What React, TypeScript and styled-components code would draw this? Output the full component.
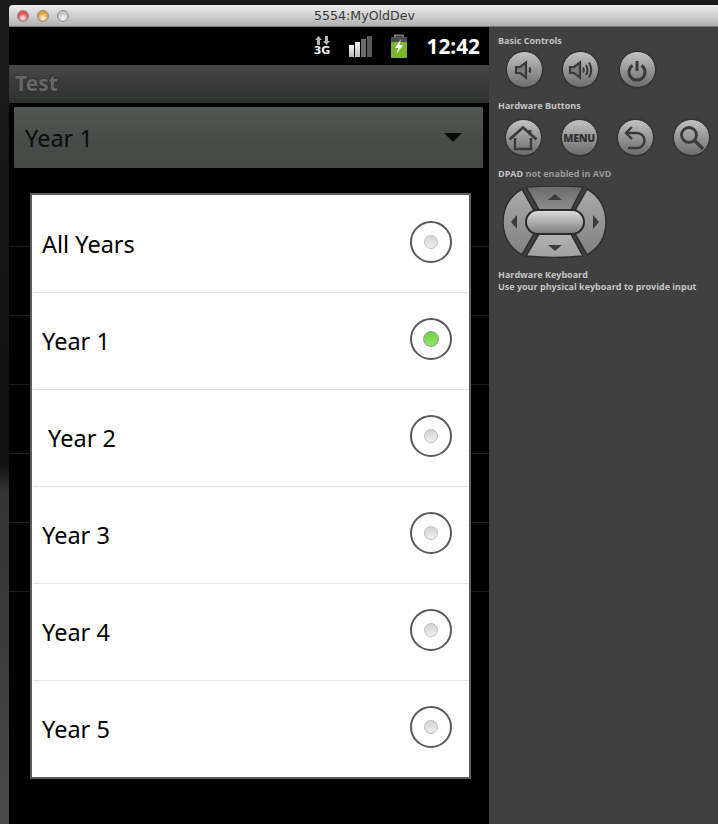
import React from "react"
import styled, { createGlobalStyle } from "styled-components"

const years = ["All Years", "Year 1", " Year 2", "Year 3", "Year 4", "Year 5"]
const selected = "Year 1"
const underlay = [1, 2, 3, 4, 5, 6]

const App = () => {
  return (
    <Page>
      <GlobalStyle />
      <TitleBar>
        <Lights>
          <Light color="#e2504f" />
          <Light color="#e5a03c" />
          <Light color="#c4c4c4" />
        </Lights>
        <WindowName>5554:MyOldDev</WindowName>
      </TitleBar>
      <Body>
        <Screen>
          <StatusBar>
            <NetworkIcon>
              <svg width="15" height="9" viewBox="0 0 15 9">
                <path d="M3.500 0 L7 4 H5 V9 H2 V4 H0 Z M11.500 9 L8 5 H10 V0 H13 V5 H15 Z" fill="#b4b4b4" />
              </svg>
              <span>3G</span>
            </NetworkIcon>
            <svg width="23" height="21" viewBox="0 0 23 21">
              <defs>
                <linearGradient id="bar" x1="0" y1="0" x2="0" y2="1">
                  <stop offset="0" stopColor="#f4f4f4" />
                  <stop offset="1" stopColor="#bcbcbc" />
                </linearGradient>
              </defs>
              <rect x="0" y="9" width="5" height="12" fill="url(#bar)" />
              <rect x="6" y="6" width="5" height="15" fill="url(#bar)" />
              <rect x="12" y="3" width="5" height="18" fill="#6c6c6c" />
              <rect x="18" y="0" width="5" height="21" fill="#5a5a5a" />
            </svg>
            <svg width="18" height="24" viewBox="0 0 18 24">
              <path d="M5 3 V1.500 H13 V3" fill="none" stroke="#777" strokeWidth="2" />
              <rect x="1" y="3" width="16" height="8" fill="#4c4c4c" />
              <rect x="1" y="8" width="16" height="16" rx="1" fill="#7db52e" />
              <path d="M11 5 L5 14 H8.500 L6.500 20 L13 11 H9.500 Z" fill="#fff" />
            </svg>
            <Clock>12:42</Clock>
          </StatusBar>
          <AppTitle>
            <span>Test</span>
          </AppTitle>
          <SpinnerWrap>
            <Spinner>
              <span>{selected}</span>
              <svg width="18" height="9" viewBox="0 0 18 9">
                <path d="M0 0 H18 L9 9 Z" fill="#060806" />
              </svg>
            </Spinner>
          </SpinnerWrap>
          <Underlay>
            {underlay.map(n => (
              <UnderRow key={n} />
            ))}
          </Underlay>
          <Dialog>
            {years.map(year => (
              <Row key={year}>
                <RowLabel>{year}</RowLabel>
                <Radio>
                  <RadioDot checked={year === selected} />
                </Radio>
              </Row>
            ))}
          </Dialog>
        </Screen>
        <Panel>
          <Heading>Basic Controls</Heading>
          <ButtonRow>
            <RoundButton>
              <svg width="24" height="24" viewBox="0 0 24 24">
                <path d="M4 9 H8 L14 4.500 V19.500 L8 15 H4 Z" fill="#7a7a7a" stroke="#3a3a3a" strokeWidth="2.200" />
                <path d="M17.500 9.500 Q19 12 17.500 14.500" fill="none" stroke="#3a3a3a" strokeWidth="2.400" />
              </svg>
            </RoundButton>
            <RoundButton>
              <svg width="26" height="24" viewBox="0 0 26 24">
                <path d="M2 9 H6 L12 4.500 V19.500 L6 15 H2 Z" fill="#7a7a7a" stroke="#3a3a3a" strokeWidth="2.200" />
                <path d="M15 9.500 Q16.500 12 15 14.500 M18 7 Q21 12 18 17 M21 4.500 Q25.500 12 21 19.500" fill="none" stroke="#3a3a3a" strokeWidth="2" />
              </svg>
            </RoundButton>
            <RoundButton>
              <svg width="24" height="24" viewBox="0 0 24 24">
                <path d="M7.500 7.500 A8 8 0 1 0 16.500 7.500" fill="none" stroke="#3a3a3a" strokeWidth="3" />
                <path d="M12 3 V13" stroke="#3a3a3a" strokeWidth="3" />
              </svg>
            </RoundButton>
          </ButtonRow>
          <Heading>Hardware Buttons</Heading>
          <HardwareRow>
            <RoundButton>
              <svg width="30" height="26" viewBox="0 0 30 26">
                <path d="M1.500 14.500 L15 2.500 L28.500 14.500 M22 5 V10" fill="none" stroke="#3a3a3a" strokeWidth="2.800" />
                <path d="M7 13 V24 H23 V13" fill="none" stroke="#3a3a3a" strokeWidth="2.400" />
              </svg>
            </RoundButton>
            <RoundButton>
              <MenuLabel>MENU</MenuLabel>
            </RoundButton>
            <RoundButton>
              <svg width="24" height="26" viewBox="0 0 24 26">
                <path d="M9 2 L3 8 L9 14" fill="none" stroke="#3a3a3a" strokeWidth="2.400" />
                <path d="M3 8 H14 A7.500 7.500 0 0 1 14 23 H5" fill="none" stroke="#3a3a3a" strokeWidth="2.400" />
              </svg>
            </RoundButton>
            <RoundButton>
              <svg width="28" height="28" viewBox="0 0 28 28">
                <circle cx="11" cy="11" r="7.500" fill="none" stroke="#3a3a3a" strokeWidth="2.800" />
                <path d="M16.500 16.500 L25 25" stroke="#3a3a3a" strokeWidth="3.200" />
              </svg>
            </RoundButton>
          </HardwareRow>
          <Heading>
            DPAD <Dim>not enabled in AVD</Dim>
          </Heading>
          <DpadBox>
            <svg width="106" height="72" viewBox="0 1 106 72">
              <defs>
                <linearGradient id="segTop" x1="0" y1="0" x2="0" y2="1">
                  <stop offset="0" stopColor="#6a6a6a" />
                  <stop offset="1" stopColor="#8e8e8e" />
                </linearGradient>
                <linearGradient id="segBottom" x1="0" y1="0" x2="0" y2="1">
                  <stop offset="0" stopColor="#b4b4b4" />
                  <stop offset="1" stopColor="#a0a0a0" />
                </linearGradient>
                <linearGradient id="side" x1="0" y1="0" x2="0" y2="1">
                  <stop offset="0" stopColor="#ababab" />
                  <stop offset="1" stopColor="#808080" />
                </linearGradient>
                <linearGradient id="pill" x1="0" y1="0" x2="0" y2="1">
                  <stop offset="0" stopColor="#e0e0e0" />
                  <stop offset="1" stopColor="#7c7c7c" />
                </linearGradient>
              </defs>
              <g stroke="#2f2f2f" strokeWidth="1.600">
                <path d="M24 2 Q53 0 81 2 L69 25 H37 Z" fill="url(#segTop)" />
                <path d="M37 49 H69 L81 71 Q53 74 24 71 Z" fill="url(#segBottom)" />
                <path d="M20 4 L33 27 Q24 37 33 47 L20 70 Q1 59 1 37 Q1 15 20 4 Z" fill="url(#side)" />
                <path d="M85 4 L72 27 Q81 37 72 47 L85 70 Q104 59 104 37 Q104 15 85 4 Z" fill="url(#side)" />
              </g>
              <rect x="24" y="25" width="58" height="24" rx="12" fill="url(#pill)" stroke="#2a2a2a" strokeWidth="2" />
              <g fill="#3c3c3c">
                <path d="M53 9 L60 15 H46 Z" />
                <path d="M53 66 L60 60 H46 Z" />
                <path d="M9 37 L15 30 V44 Z" />
                <path d="M97 37 L91 30 V44 Z" />
              </g>
            </svg>
          </DpadBox>
          <Heading>
            Hardware Keyboard
            <br />
            Use your physical keyboard to provide input
          </Heading>
        </Panel>
      </Body>
    </Page>
  )
}

export default App

const GlobalStyle = createGlobalStyle`
  html, body {
    margin: 0;
    padding: 0;
    background: #000;
  }
  * {
    box-sizing: border-box;
  }
`

const Page = styled.div`
  width: 718px;
  height: 824px;
  overflow: hidden;
  padding: 5px 0 0 9px;
  display: flex;
  flex-direction: column;
  background: linear-gradient(
    180deg,
    #1c1c1c 0,
    #141414 300px,
    #111 465px,
    #333 490px,
    #3c3c3c 650px,
    #4a4a4a 100%
  );
  font-family: "Noto Sans", "Open Sans", sans-serif;
`

const TitleBar = styled.div`
  height: 22px;
  flex-shrink: 0;
  position: relative;
  display: flex;
  align-items: center;
  justify-content: center;
  padding-left: 2px;
  background: linear-gradient(180deg, #ececec 0, #d2d2d2 50%, #b0b0b0 100%);
  border-bottom: 1px solid #777;
  border-radius: 4px 0 0 0;
`

const Lights = styled.div`
  position: absolute;
  left: 8px;
  top: 5px;
  display: flex;
  gap: 8px;
`

const Light = styled.div<{ color: string }>`
  width: 12px;
  height: 12px;
  border-radius: 50%;
  border: 1px solid #8a8a8a;
  background: radial-gradient(circle at 50% 70%, #fff 0, ${props => props.color} 55%, ${props => props.color} 100%);
`

const WindowName = styled.div`
  font-family: "DejaVu Sans", sans-serif;
  font-size: 12.600px;
  color: #3a3a3a;
`

const Body = styled.div`
  flex: 1;
  display: flex;
  min-height: 0;
`

const Screen = styled.div`
  width: 480px;
  flex-shrink: 0;
  position: relative;
  overflow: hidden;
  background: #000;
`

const StatusBar = styled.div`
  height: 38px;
  display: flex;
  align-items: center;
  justify-content: flex-end;
  padding-right: 9px;
  gap: 18px;
`

const NetworkIcon = styled.div`
  width: 15px;
  margin-right: 1px;
  display: flex;
  flex-direction: column;
  align-items: center;
  color: #f0f0f0;
  font-family: "DejaVu Sans", sans-serif;
  font-weight: bold;
  font-size: 11px;
  line-height: 12px;
`

const Clock = styled.div`
  font-size: 20.800px;
  font-weight: 700;
  color: #fff;
  margin-left: 1px;
`

const AppTitle = styled.div`
  height: 38px;
  display: flex;
  align-items: center;
  padding: 0 0 2px 6px;
  background: linear-gradient(180deg, #464646 0, #2e322f 100%);
  color: #666866;
  font-size: 21px;
  font-weight: 700;
  text-shadow: 0 0 2px #222;
`

const SpinnerWrap = styled.div`
  padding: 4px 6px 0 5px;
`

const Spinner = styled.div`
  height: 61px;
  display: flex;
  align-items: center;
  justify-content: space-between;
  padding: 0 21px 0 11px;
  border-radius: 1px;
  background: linear-gradient(180deg, #525753 0, #474c48 55%, #434845 100%);
  color: #0a0d0b;
  font-size: 23.500px;
`

const Underlay = styled.div`
  padding-top: 10px;
`

const UnderRow = styled.div`
  height: 69px;
  border-bottom: 1px solid #1d1d1d;
`

const Dialog = styled.div`
  position: absolute;
  left: 21px;
  top: 166px;
  width: 441px;
  padding-top: 1px;
  border: 2px solid #5c5c5c;
  background: #fff;
`

const Row = styled.div`
  height: 97px;
  padding: 0 17px 0 10px;
  display: flex;
  align-items: center;
  justify-content: space-between;
  position: relative;

  &:last-child {
    margin-bottom: -1px;
  }

  &:not(:last-child)::after {
    content: "";
    position: absolute;
    left: 1px;
    right: 0;
    bottom: 0;
    height: 1px;
    background: #e2e2e2;
  }
`

const RowLabel = styled.div`
  font-size: 23.500px;
  color: #000;
  white-space: pre;
  padding-bottom: 2px;
`

const Radio = styled.div`
  width: 42px;
  height: 42px;
  margin-bottom: 6px;
  border-radius: 50%;
  border: 2px solid #5a5a5a;
  display: flex;
  align-items: center;
  justify-content: center;
  background: #fff;
`

const RadioDot = styled.div<{ checked: boolean }>`
  width: ${props => (props.checked ? 16 : 14)}px;
  height: ${props => (props.checked ? 16 : 14)}px;
  border-radius: 50%;
  border: 1px solid ${props => (props.checked ? "#8f9f88" : "#bdbdbd")};
  background: ${props =>
    props.checked
      ? "linear-gradient(180deg, #6fd03f 0, #95e46a 100%)"
      : "linear-gradient(180deg, #d4d4d4 0, #efefef 100%)"};
`

const Panel = styled.div`
  flex: 1;
  background: #404040;
  padding: 8px 0 0 9px;
`

const Heading = styled.div`
  font-family: "Open Sans", sans-serif;
  font-size: 9px;
  line-height: 12px;
  font-weight: 700;
  color: #c4c4c4;
`

const Dim = styled.span`
  color: #9a9a9a;
`

const ButtonRow = styled.div`
  display: flex;
  gap: 19.500px;
  padding: 4px 0 12px 7.500px;
`

const HardwareRow = styled(ButtonRow)`
  gap: 19.200px;
  padding: 7px 0 12px 6.500px;
`

const RoundButton = styled.div`
  width: 37px;
  height: 37px;
  flex-shrink: 0;
  border-radius: 50%;
  display: flex;
  align-items: center;
  justify-content: center;
  border: 1px solid #2f2f2f;
  box-shadow: 0 0 0 1px #383838;
  background: linear-gradient(180deg, #c2c2c2 0, #6c6c6c 100%);
`

const MenuLabel = styled.span`
  font-family: "Open Sans", sans-serif;
  font-size: 10.500px;
  font-weight: 800;
  color: #333;
  letter-spacing: -0.200px;
`

const DpadBox = styled.div`
  height: 72px;
  padding-left: 4px;
  margin: 6px 0 11px;
`
